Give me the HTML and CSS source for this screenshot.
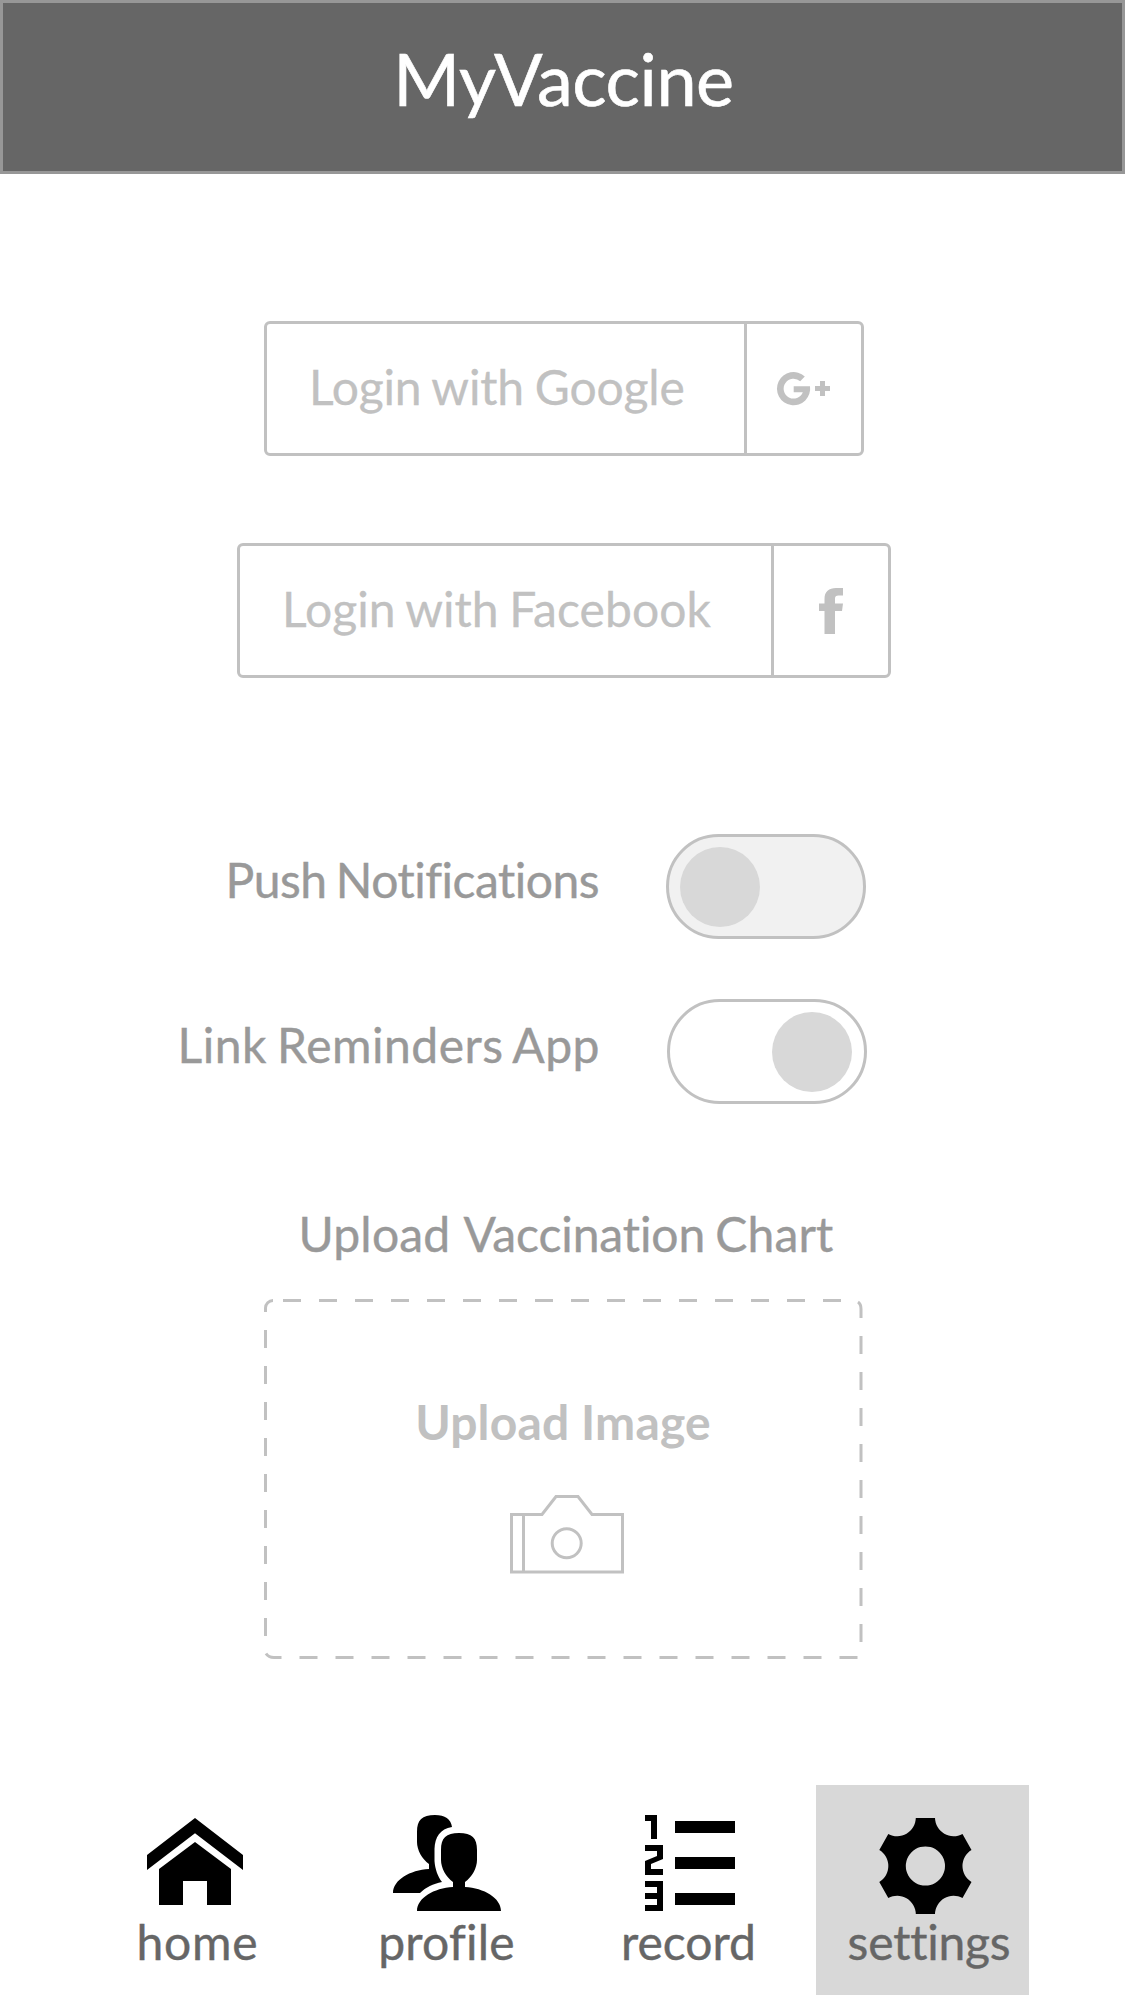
FILE: index.html
```html
<!DOCTYPE html>
<html lang="en">
<head>
<meta charset="utf-8">
<title>MyVaccine</title>
<link rel="stylesheet" href="styles.css">
</head>
<body>
<header class="header"><h1 class="title">MyVaccine</h1></header>
<main class="main">
  <button class="login google">
    <span class="login-label"><span>Login with Google</span></span>
    <span class="login-icon">
      <svg width="114" height="129" viewBox="747 324 114 129">
        <path d="M804.800 376.400A16.600 16.600 0 1 0 810 386.200H793.700V392.200H802.800A9.900 9.900 0 1 1 800.200 381.300Z"/>
        <path d="M820 381h5v5h5v5h-5v5h-5v-5h-5v-5h5z"/>
      </svg>
    </span>
  </button>
  <button class="login facebook">
    <span class="login-label"><span>Login with Facebook</span></span>
    <span class="login-icon">
      <svg width="114" height="129" viewBox="774 546 114 129">
        <path d="M824.500 634V611H819V603.500H824.500V599C824.500 591.500 829 588 836 588H843V595.500H838.500C836 595.500 835 596.500 835 598.500V603.500H843L842 611H835V634Z"/>
      </svg>
    </span>
  </button>
  <section class="options">
    <div class="option"><span class="option-label push">Push Notifications</span><span class="toggle off"><span class="knob"></span></span></div>
    <div class="option"><span class="option-label link">Link Reminders App</span><span class="toggle on"><span class="knob"></span></span></div>
  </section>
  <section class="upload">
    <h2 class="upload-title">Upload <span class="shifted">Vaccination</span> Chart</h2>
    <div class="dropzone">
      <svg class="outline" width="600" height="361" viewBox="264 1299 600 361">
        <path d="M283 1300.500H842"/>
        <path d="M858 1302Q861 1304 861 1309V1642" stroke-dashoffset="1.200"/>
        <path d="M857.500 1657.500H274Q268.500 1657.500 266 1653.500"/>
        <path d="M265.500 1636V1308a7.500 7.500 0 0 1 7.500 -7.500"/>
      </svg>
      <span class="upload-label">Upload Image</span>
      <svg class="camera" width="114" height="79" viewBox="510 1495 114 79"><path d="M511.500 1514.500H542L556 1496.500H578L592 1514.500H622.500V1572H511.500ZM523.500 1514.500V1572"/><circle cx="566.700" cy="1543.300" r="14.500"/></svg>
    </div>
  </section>
</main>
<nav class="nav">
  <a class="tab home">
    <svg width="213" height="126" viewBox="91 1785 213 126"><path d="M195 1818L243 1855V1870L195 1833.300L147 1870V1855ZM195 1842L231 1869V1905H207V1881H183V1905H159V1869Z"/></svg>
    <span class="tab-label">home</span>
  </a>
  <a class="tab profile">
    <svg width="213" height="126" viewBox="340 1785 213 126"><path d="M417 1911C417 1898 434 1888 453 1887V1882C446 1877 441 1868 441 1860V1850C441 1838 446 1833 459 1833C472 1833 477 1838 477 1850V1860C477 1868 472 1877 465 1882V1887C484 1888 501 1898 501 1911Z"/><path d="M393 1893C393 1880 410 1870 429 1869V1864C422 1859 417 1850 417 1842V1832C417 1820 422 1815 435 1815C445 1815 451 1819 452 1827C440 1829 435 1837 434.500 1849V1861C435 1869 438 1877 442 1882C433 1884 426 1887 420 1893Z"/></svg>
    <span class="tab-label">profile</span>
  </a>
  <a class="tab record">
    <svg width="213" height="126" viewBox="582 1785 213 126"><path d="M645 1815H657V1839H651V1821H645ZM645 1845H663V1859L651 1864V1869H663V1875H645V1861L657 1856V1851H645ZM645 1881H663V1911H645V1905H657V1899H645V1893H657V1887H645ZM675 1821H735V1833H675ZM675 1857H735V1869H675ZM675 1893H735V1905H675Z"/></svg>
    <span class="tab-label">record</span>
  </a>
  <a class="tab settings">
    <svg width="213" height="126" viewBox="816 1785 213 126"><path fill-rule="evenodd" d="M915.800 1818H935A18.700 18.700 0 0 0 962.500 1834L971.500 1850A18.700 18.700 0 0 0 971.500 1882L962.500 1898A18.700 18.700 0 0 0 935 1914H915.800A18.700 18.700 0 0 0 888.300 1898L879.300 1882A18.700 18.700 0 0 0 879.300 1850L888.300 1834A18.700 18.700 0 0 0 915.800 1818ZM925.400 1846.400a19.600 19.600 0 1 0 .01 0Z"/></svg>
    <span class="tab-label">settings</span>
  </a>
</nav>
</body>
</html>
```
FILE: styles.css
```css
* { box-sizing: border-box; }
body { margin: 0; width: 1125px; height: 1995px; background: #fff; font-family: Lato, "Open Sans", sans-serif; font-size: 48px; font-variant-ligatures: none; display: flex; flex-direction: column; }
h1, h2 { margin: 0; font-weight: 400; }
svg { display: block; }
.header { height: 174px; flex: none; background: #666; border: 3px solid #979797; display: flex; justify-content: center; padding-top: 32px; }
.title { font-size: 72px; line-height: 86px; color: #fff; letter-spacing: -0.45px; margin-left: 2px; -webkit-text-stroke: 0.6px; }
.main { display: flex; flex-direction: column; align-items: center; height: 1611px; padding-top: 147px; }
.login { display: flex; height: 135px; padding: 0; border: 3px solid #c1c1c1; border-radius: 6px; background: #fff; color: #c1c1c1; font: inherit; margin-left: 3px; }
.google { width: 600px; letter-spacing: -0.15px; word-spacing: -1.3px; }
.facebook { width: 654px; margin-top: 87px; word-spacing: -1.8px; letter-spacing: 0.07px; }
.login-label { flex: 1; text-align: left; padding-left: 42px; line-height: 126px; white-space: nowrap; -webkit-text-stroke: 0.3px; }
.login-icon { width: 117px; border-left: 3px solid #c1c1c1; fill: #c1c1c1; }
.options { width: 1125px; margin-top: 156px; display: flex; flex-direction: column; gap: 60px; }
.option { height: 105px; display: flex; }
.option-label { width: 600px; text-align: right; color: #999; line-height: 91px; white-space: nowrap; -webkit-text-stroke: 0.4px; }
.push { letter-spacing: -0.5px; word-spacing: -2.5px; padding-right: 1px; }
.link { letter-spacing: 0.5px; word-spacing: -2.5px; }
.toggle { width: 200px; height: 105px; border: 3px solid #c1c1c1; border-radius: 53px; margin-left: 66px; padding: 10px 11px; display: flex; }
.off { background: #f1f1f1; }
.on { margin-left: 67px; padding-right: 12px; justify-content: flex-end; }
.knob { width: 80px; height: 80px; border-radius: 50%; background: #d8d8d8; }
.upload { width: 600px; margin-top: 100px; margin-left: 3px; display: flex; flex-direction: column; align-items: center; }
.upload-title { font-size: 48px; color: #999; line-height: 60px; margin-left: 4px; white-space: nowrap; letter-spacing: 0.2px; word-spacing: -2.5px; -webkit-text-stroke: 0.4px; }
.shifted { margin-left: 3px; letter-spacing: -0.1px; }
.dropzone { position: relative; width: 600px; height: 361px; margin-top: 35px; display: flex; flex-direction: column; align-items: center; padding-top: 93px; }
.outline { position: absolute; left: 0; top: 0; fill: none; stroke: #c1c1c1; stroke-width: 3px; stroke-dasharray: 18; }
.upload-label { font-weight: 700; color: #c1c1c1; line-height: 60px; letter-spacing: 0.15px; margin-right: 2px; }
.camera { margin-top: 43px; margin-left: 6px; fill: none; stroke: #c1c1c1; stroke-width: 3px; overflow: visible; }
.nav { height: 210px; flex: none; display: flex; padding-left: 91px; }
.tab { width: 213px; height: 210px; text-align: center; color: #666; }
.tab svg { fill: #000; overflow: visible; }
.tab-label { display: block; line-height: 62px; white-space: nowrap; -webkit-text-stroke: 0.4px; }
.home { letter-spacing: 0.8px; }
.profile { margin-left: 36px; letter-spacing: 0.2px; }
.record { margin-left: 29px; }
.settings { margin-left: 21px; background: #d8d8d8; letter-spacing: -0.2px; }
.settings .tab-label { padding-left: 13px; }
```
